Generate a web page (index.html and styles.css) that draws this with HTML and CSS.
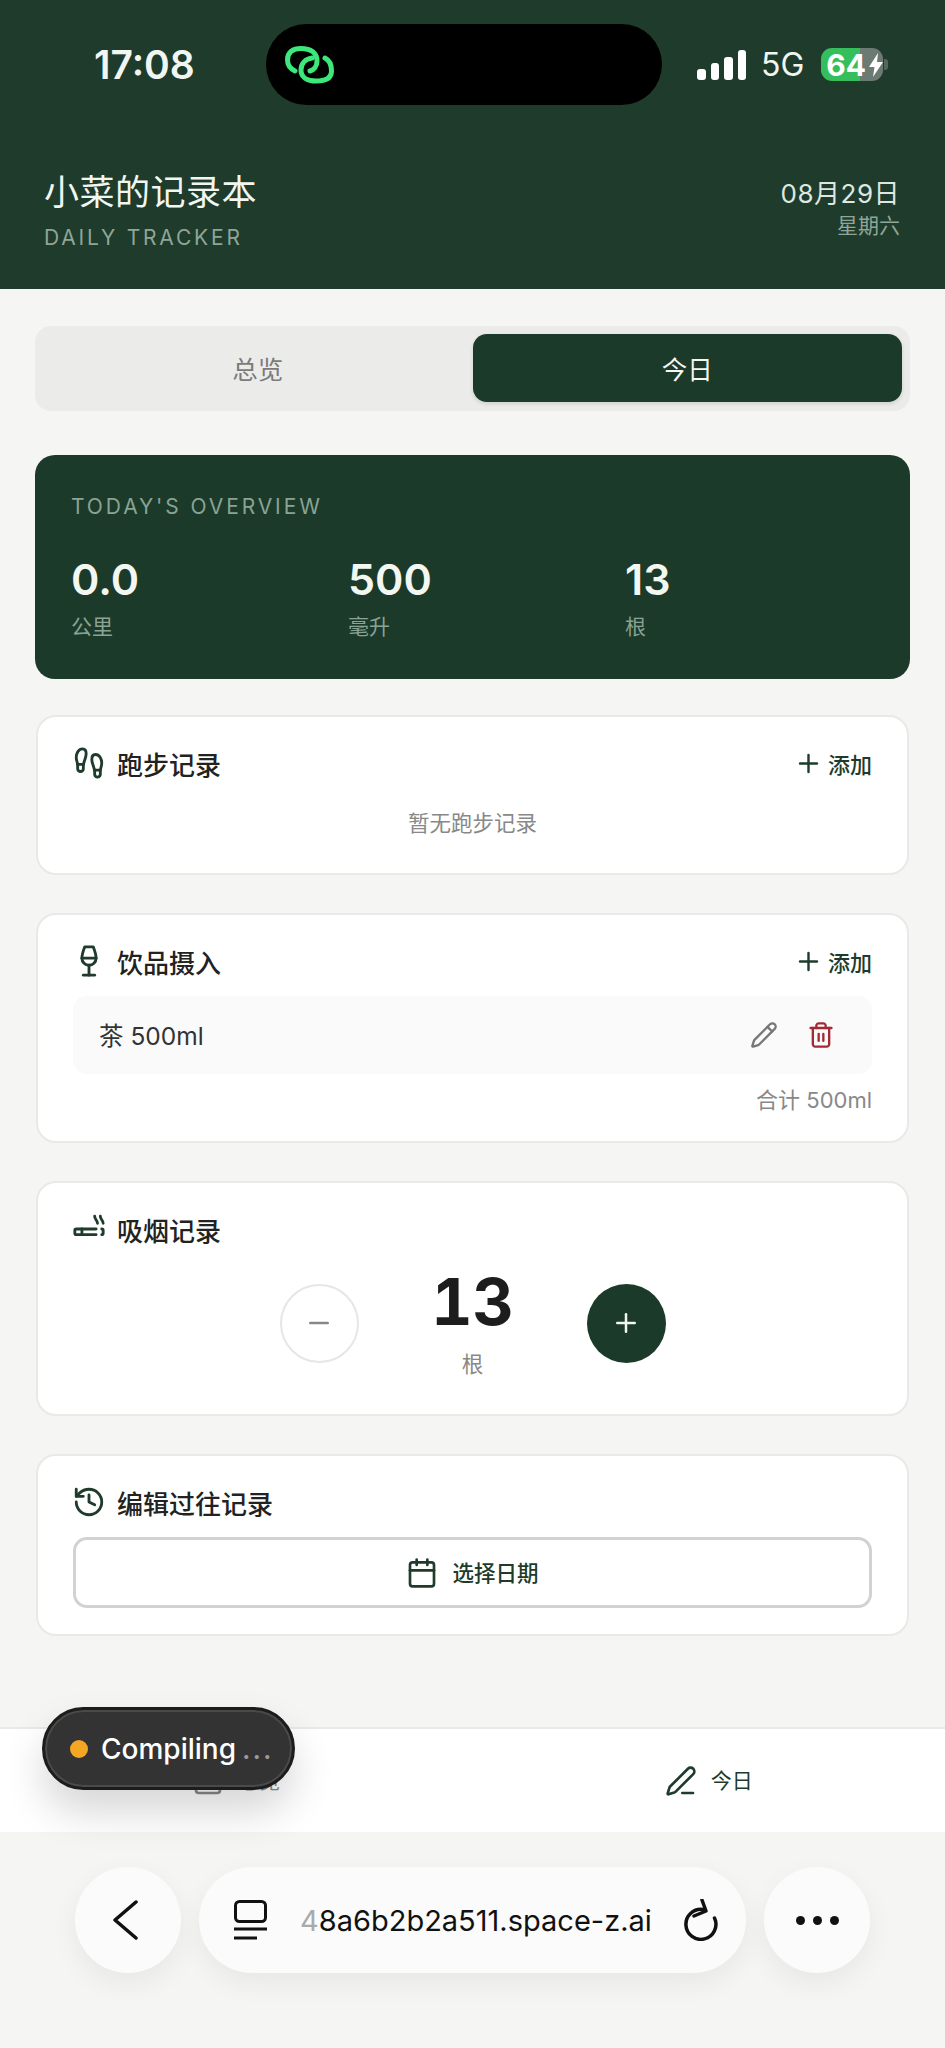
FILE: index.html
```html
<!DOCTYPE html>
<html lang="zh-CN">
<head>
    <meta charset="UTF-8">
    <meta name="viewport" content="width=device-width, initial-scale=1.0">
    <title>小菜的记录本</title>
    <link rel="stylesheet" href="styles.css">
</head>
<body>
    <header class="app_header">
        <div class="status_bar">
            <span class="status_time">17:08</span>
            <div class="island">
                <svg class="island_logo" viewBox="0 0 50 38"><path d="M10 25C4 22 2.5 18 2.5 14 2.5 6 8 2.5 16 2.5 26 2.5 32 7 32 15 32 20 29 24 25 25"/><path d="M27 12C20 13 16 18 16 24 16 31 22 35 31 35 41 35 46.5 32 46.5 25 46.5 18 44 14 40 12"/></svg>
            </div>
            <div class="status_right">
                <div class="signal">
                    <span class="signal_bar bar_one"></span>
                    <span class="signal_bar bar_two"></span>
                    <span class="signal_bar bar_three"></span>
                    <span class="signal_bar bar_four"></span>
                </div>
                <span class="network">5G</span>
                <div class="battery">
                    <span>64</span>
                    <svg class="battery_bolt" viewBox="0 0 14 24"><path d="M9 0 0 14h5.5L4 24l10-15H8z"/></svg>
                </div>
                <span class="battery_nub"></span>
            </div>
        </div>
        <div class="header_main">
            <div>
                <h1 class="app_title">小菜的记录本</h1>
                <p class="app_subtitle">DAILY TRACKER</p>
            </div>
            <div class="header_date">
                <p class="date_main">08月29日</p>
                <p class="date_week">星期六</p>
            </div>
        </div>
    </header>

    <main class="content">
        <div class="tabs">
            <button class="tab" type="button">总览</button>
            <button class="tab tab_active" type="button">今日</button>
        </div>

        <section class="overview">
            <p class="overview_label">TODAY'S OVERVIEW</p>
            <div class="overview_grid">
                <div><p class="stat_value">0.0</p><p class="stat_unit">公里</p></div>
                <div><p class="stat_value">500</p><p class="stat_unit">毫升</p></div>
                <div><p class="stat_value">13</p><p class="stat_unit">根</p></div>
            </div>
        </section>

        <div class="card_list">
            <section class="card">
                <div class="card_head">
                    <h2 class="card_title">
                        <svg class="icon title_icon" viewBox="0 0 24 24"><path d="M4 16v-2.38C4 11.5 2.97 10.5 3 8c.03-2.72 1.49-6 4.5-6C9.37 2 10 3.8 10 5.5c0 3.11-2 5.66-2 8.68V16a2 2 0 1 1-4 0Z"/><path d="M20 20v-2.38c0-2.12 1.03-3.12 1-5.62-.03-2.72-1.49-6-4.5-6C14.63 6 14 7.8 14 9.5c0 3.11 2 5.66 2 8.68V20a2 2 0 1 0 4 0Z"/><path d="M16 17h4"/><path d="M4 13h4"/></svg>
                        跑步记录
                    </h2>
                    <button class="add_btn" type="button">
                        <svg class="icon add_icon" viewBox="0 0 24 24"><path d="M5 12h14"/><path d="M12 5v14"/></svg>
                        添加
                    </button>
                </div>
                <p class="empty_text">暂无跑步记录</p>
            </section>

            <section class="card">
                <div class="card_head">
                    <h2 class="card_title">
                        <svg class="icon title_icon" viewBox="0 0 24 24"><path d="M8 22h8"/><path d="M7 10h10"/><path d="M12 15v7"/><path d="M12 15a5 5 0 0 0 5-5c0-2-.5-4-2-8H9c-1.5 4-2 6-2 8a5 5 0 0 0 5 5Z"/></svg>
                        饮品摄入
                    </h2>
                    <button class="add_btn" type="button">
                        <svg class="icon add_icon" viewBox="0 0 24 24"><path d="M5 12h14"/><path d="M12 5v14"/></svg>
                        添加
                    </button>
                </div>
                <div class="drink_row">
                    <span class="drink_name">茶 500ml</span>
                    <div class="drink_actions">
                        <svg class="icon edit_icon" viewBox="0 0 24 24"><path d="M21.174 6.812a1 1 0 0 0-3.986-3.987L3.842 16.174a2 2 0 0 0-.5.83l-1.321 4.352a.5.5 0 0 0 .623.622l4.353-1.32a2 2 0 0 0 .83-.497z"/><path d="m15 5 4 4"/></svg>
                        <svg class="icon delete_icon" viewBox="0 0 24 24"><path d="M3 6h18"/><path d="M19 6v14c0 1-1 2-2 2H7c-1 0-2-1-2-2V6"/><path d="M8 6V4c0-1 1-2 2-2h4c1 0 2 1 2 2v2"/><path d="M10 11v6"/><path d="M14 11v6"/></svg>
                    </div>
                </div>
                <p class="drink_total">合计 500ml</p>
            </section>

            <section class="card">
                <div class="card_head">
                    <h2 class="card_title">
                        <svg class="icon title_icon" viewBox="0 0 24 24"><path d="M17 12H3a1 1 0 0 0-1 1v2a1 1 0 0 0 1 1h14"/><path d="M18 8c0-2.5-2-2.5-2-5"/><path d="M21 16a1 1 0 0 0 1-1v-2a1 1 0 0 0-1-1"/><path d="M22 8c0-2.5-2-2.5-2-5"/><path d="M7 12v4"/></svg>
                        吸烟记录
                    </h2>
                </div>
                <div class="counter">
                    <button class="round_btn round_minus" type="button">
                        <svg class="icon round_icon" viewBox="0 0 24 24"><path d="M5 12h14"/></svg>
                    </button>
                    <div class="counter_mid">
                        <p class="counter_value">13</p>
                        <p class="counter_unit">根</p>
                    </div>
                    <button class="round_btn round_plus" type="button">
                        <svg class="icon round_icon" viewBox="0 0 24 24"><path d="M5 12h14"/><path d="M12 5v14"/></svg>
                    </button>
                </div>
            </section>

            <section class="card">
                <div class="card_head">
                    <h2 class="card_title">
                        <svg class="icon title_icon" viewBox="0 0 24 24"><path d="M3 12a9 9 0 1 0 9-9 9.75 9.75 0 0 0-6.74 2.74L3 8"/><path d="M3 3v5h5"/><path d="M12 7v5l4 2"/></svg>
                        编辑过往记录
                    </h2>
                </div>
                <button class="date_btn" type="button">
                    <svg class="icon date_icon" viewBox="0 0 24 24"><path d="M8 2v4"/><path d="M16 2v4"/><rect width="18" height="18" x="3" y="4" rx="2"/><path d="M3 10h18"/></svg>
                    <span class="date_btn_text">选择日期</span>
                </button>
            </section>
        </div>
    </main>

    <nav class="bottom_nav">
        <div class="nav_item">
            <svg class="icon nav_icon" viewBox="0 0 24 24"><rect width="18" height="18" x="3" y="3" rx="2"/><path d="M3 9h18"/></svg>
            <span class="nav_text">总览</span>
        </div>
        <div class="nav_item nav_active">
            <svg class="icon nav_icon" viewBox="0 0 24 24"><path d="M13 21h8"/><path d="M21.174 6.812a1 1 0 0 0-3.986-3.987L3.842 16.174a2 2 0 0 0-.5.83l-1.321 4.352a.5.5 0 0 0 .623.622l4.353-1.32a2 2 0 0 0 .83-.497z"/></svg>
            <span class="nav_text">今日</span>
        </div>
    </nav>

    <div class="browser_bar">
        <button class="browser_circle" type="button">
            <svg class="browser_back" viewBox="0 0 26 40"><path d="M24 2 3 20l21 18"/></svg>
        </button>
        <div class="url_pill">
            <svg class="browser_tabs" viewBox="0 0 33 40"><rect x="1.5" y="1.5" width="30" height="20" rx="4"/><path d="M0 29h33"/><path d="M0 38h23"/></svg>
            <span class="url_text"><span class="url_fade">4</span>8a6b2b2a511.space-z.ai</span>
            <svg class="browser_reload" viewBox="0 0 34 42"><path d="M19 10.500A15 15 0 1 0 30.500 19"/><path d="M18 1l4 11-12 5"/></svg>
        </div>
        <button class="browser_circle" type="button">
            <span class="more_dots"><i></i><i></i><i></i></span>
        </button>
    </div>

    <div class="compile_pill">
        <span class="compile_dot"></span>
        <span>Compiling</span>
        <span class="compile_more">...</span>
    </div>
</body>
</html>
```

FILE: styles.css
```css
* {
    box-sizing: border-box;
}
body {
    position: relative;
    width: 945px;
    height: 2048px;
    margin: 0;
    overflow: hidden;
    font-family: Inter, "Noto Sans CJK SC", sans-serif;
    background-color: #f5f5f4;
    color: #222;
}
p, h1, h2 {
    margin: 0;
    font-weight: 400;
}
button {
    font-family: inherit;
    border: none;
    background: none;
    padding: 0;
}
.icon {
    fill: none;
    stroke: currentColor;
    stroke-width: 2;
    stroke-linecap: round;
    stroke-linejoin: round;
    flex-shrink: 0;
}

/* top bar */
.app_header {
    height: 289px;
    padding-top: 24px;
    background-color: #1e3b2b;
    color: #f2f6f1;
}
.status_bar {
    display: flex;
    align-items: center;
    height: 81px;
}
.status_time {
    width: 266px;
    padding-left: 94px;
    font-size: 39px;
    font-weight: 600;
}
.island {
    display: flex;
    align-items: center;
    width: 396px;
    height: 81px;
    padding-left: 19px;
    border-radius: 41px;
    background-color: #000;
}
.island_logo {
    width: 50px;
    height: 38px;
    fill: none;
    stroke: #3ee77c;
    stroke-width: 5;
    stroke-linecap: round;
}
.status_right {
    display: flex;
    align-items: center;
    margin-left: 35px;
}
.signal {
    display: flex;
    align-items: flex-end;
    gap: 5px;
    height: 30px;
}
.signal_bar {
    width: 8.500px;
    border-radius: 3px;
    background-color: #fff;
}
.bar_one { height: 11px; }
.bar_two { height: 17px; }
.bar_three { height: 23px; }
.bar_four { height: 30px; }
.network {
    margin-left: 15px;
    font-size: 32px;
}
.battery {
    display: flex;
    align-items: center;
    width: 62px;
    height: 33px;
    margin-left: 17px;
    padding-left: 5px;
    border-radius: 11px;
    background: linear-gradient(to right, #35bf5c 63%, #6b7a72 63%);
    color: #fff;
    font-size: 30px;
    font-weight: 700;
}
.battery_bolt {
    width: 14px;
    height: 24px;
    margin-left: 3px;
    fill: #fff;
}
.battery_nub {
    width: 4px;
    height: 11px;
    margin-left: 1px;
    border-radius: 0 3px 3px 0;
    background-color: #56655d;
}
.header_main {
    display: flex;
    justify-content: space-between;
    margin-top: 65px;
    padding: 0 45px 0 44px;
}
.app_title {
    font-size: 35px;
    line-height: 44px;
    letter-spacing: 0.500px;
    font-weight: 400;
}
.app_subtitle {
    margin-top: 10px;
    font-size: 21px;
    line-height: 28px;
    letter-spacing: 2.800px;
    color: #8fa598;
}
.header_date {
    padding-top: 8px;
    text-align: right;
}
.date_main {
    font-size: 26px;
    line-height: 32px;
    letter-spacing: 0.500px;
    color: #dfe7e0;
}
.date_week {
    font-size: 21px;
    line-height: 32px;
    color: #8fa598;
}

/* page content */
.content {
    height: 1438px;
    padding: 37px 35px 0;
}
.tabs {
    display: flex;
    height: 85px;
    padding: 8px 8px 9px;
    border-radius: 16px;
    background-color: #ebebea;
}
.tab {
    flex: 1;
    padding-bottom: 2px;
    border-radius: 14px;
    font-size: 25.500px;
    color: #7b7b7b;
}
.tab_active {
    background-color: #1b3a29;
    box-shadow: 0 2px 4px rgba(0, 0, 0, 0.12);
    color: #f4f7f3;
}
.overview {
    height: 224px;
    margin-top: 44px;
    padding: 36px 36px 0;
    border-radius: 20px;
    background-color: #1b3a29;
    color: #f3f7f1;
}
.overview_label {
    font-size: 21px;
    line-height: 32px;
    letter-spacing: 2.900px;
    color: #8aa394;
}
.overview_grid {
    display: grid;
    grid-template-columns: repeat(3, 1fr);
    gap: 28px;
    margin-top: 29px;
}
.stat_value {
    font-size: 43px;
    line-height: 54px;
    font-weight: 600;
}
.stat_unit {
    margin-top: 6px;
    font-size: 21px;
    line-height: 30px;
    color: #8aa394;
}
.card_list {
    display: flex;
    flex-direction: column;
    gap: 38px;
    margin-top: 36px;
    padding: 0 1px;
}
.card {
    padding: 29px 35px 26px;
    border: 2px solid #e9e9e8;
    border-radius: 20px;
    background-color: #fff;
}
.card_head {
    display: flex;
    justify-content: space-between;
    align-items: flex-start;
    height: 36px;
}
.card_title {
    display: flex;
    align-items: center;
    gap: 11px;
    height: 34px;
    margin-left: -1px;
    font-size: 26px;
    font-weight: 500;
    color: #222;
}
.title_icon {
    width: 34px;
    height: 34px;
    color: #1e3b2b;
}
.add_btn {
    display: flex;
    align-items: center;
    gap: 5px;
    height: 34px;
    font-size: 22px;
    font-weight: 500;
    color: #1e3b2b;
}
.add_icon {
    width: 29px;
    height: 29px;
}
.empty_text {
    margin-top: 26px;
    padding-bottom: 9px;
    font-size: 21.500px;
    line-height: 30px;
    text-align: center;
    color: #888;
}
.drink_row {
    display: flex;
    justify-content: space-between;
    align-items: center;
    height: 78px;
    margin-top: 16px;
    padding: 0 37px 0 26px;
    border-radius: 14px;
    background-color: #fafafa;
    font-size: 24.500px;
    color: #333;
}
.drink_name {
    padding-bottom: 2px;
}
.drink_actions {
    display: flex;
    align-items: center;
    gap: 29px;
}
.edit_icon {
    width: 28px;
    height: 28px;
    color: #777;
}
.delete_icon {
    width: 28px;
    height: 28px;
    color: #a32a35;
}
.drink_total {
    margin-top: 11px;
    font-size: 22px;
    line-height: 30px;
    text-align: right;
    color: #888;
}
.counter {
    display: flex;
    justify-content: center;
    align-items: center;
    gap: 75px;
    margin-top: 19px;
    padding-bottom: 9px;
}
.round_btn {
    display: flex;
    justify-content: center;
    align-items: center;
    width: 79px;
    height: 79px;
    border-radius: 50%;
}
.round_minus {
    border: 2px solid #e6e6e6;
    color: #888;
}
.round_plus {
    background-color: #1b3a29;
    color: #f2f6f1;
}
.round_icon {
    width: 30px;
    height: 30px;
}
.counter_mid {
    width: 78px;
    text-align: center;
}
.counter_value {
    margin: 0 -6px;
    font-size: 64px;
    line-height: 70px;
    font-weight: 700;
    font-variant-numeric: tabular-nums;
    color: #1d1d1d;
}
.counter_unit {
    margin-top: 12px;
    font-size: 21.500px;
    line-height: 30px;
    color: #888;
}
.date_btn {
    display: flex;
    justify-content: center;
    align-items: center;
    gap: 14px;
    width: 100%;
    height: 71px;
    margin-top: 16px;
    border: 3px solid #d2d2d2;
    border-radius: 14px;
    font-size: 21.500px;
    font-weight: 500;
    color: #1e3b2b;
}
.date_btn_text {
    padding-bottom: 3px;
}
.date_icon {
    width: 32px;
    height: 32px;
}

/* bottom nav */
.bottom_nav {
    display: flex;
    height: 105px;
    border-top: 2px solid #e9e9e8;
    background-color: #fff;
}
.nav_item {
    flex: 1;
    display: flex;
    justify-content: center;
    align-items: center;
    gap: 14px;
    font-size: 21px;
    color: #888;
}
.nav_active {
    color: #1e3b2b;
}
.nav_text {
    padding-bottom: 4px;
}
.nav_icon {
    width: 32px;
    height: 32px;
}

/* browser chrome */
.browser_bar {
    display: flex;
    gap: 18px;
    margin-top: 35px;
    padding-left: 75px;
}
.browser_circle {
    display: flex;
    justify-content: center;
    align-items: center;
    width: 106px;
    height: 106px;
    border-radius: 50%;
    background-color: #fbfbfb;
    box-shadow: 0 10px 28px rgba(0, 0, 0, 0.06);
}
.browser_back {
    width: 26px;
    height: 40px;
    margin-right: 6px;
    fill: none;
    stroke: #111;
    stroke-width: 3.500;
    stroke-linecap: round;
    stroke-linejoin: round;
}
.url_pill {
    display: flex;
    align-items: center;
    width: 547px;
    height: 106px;
    padding-left: 35px;
    border-radius: 53px;
    background-color: #fbfbfb;
    box-shadow: 0 10px 28px rgba(0, 0, 0, 0.06);
}
.browser_tabs {
    width: 33px;
    height: 40px;
    fill: none;
    stroke: #111;
    stroke-width: 3;
}
.url_text {
    margin-left: 33px;
    font-size: 29px;
    color: #111;
    white-space: nowrap;
}
.url_fade {
    color: #aaa;
}
.browser_reload {
    width: 34px;
    height: 42px;
    margin-left: 32px;
    fill: none;
    stroke: #111;
    stroke-width: 3.500;
    stroke-linecap: round;
    stroke-linejoin: round;
}
.more_dots {
    display: flex;
    gap: 8px;
}
.more_dots i {
    width: 9px;
    height: 9px;
    border-radius: 50%;
    background-color: #111;
}

/* floating badge over the nav */
.compile_pill {
    position: absolute;
    left: 42px;
    top: 1707px;
    display: flex;
    align-items: center;
    width: 253px;
    height: 83px;
    padding-left: 25px;
    border: 3px solid #1c1c1c;
    border-radius: 42px;
    background-color: #333;
    box-shadow: inset 0 0 0 2px #4a4a4a, 0 22px 40px rgba(0, 0, 0, 0.16);
    color: #fff;
    font-size: 28px;
    font-weight: 500;
}
.compile_dot {
    width: 18px;
    height: 18px;
    margin-right: 13px;
    border-radius: 50%;
    background-color: #f5a623;
}
.compile_more {
    margin-left: 6px;
    letter-spacing: 2px;
    color: #9a9a9a;
}
```
